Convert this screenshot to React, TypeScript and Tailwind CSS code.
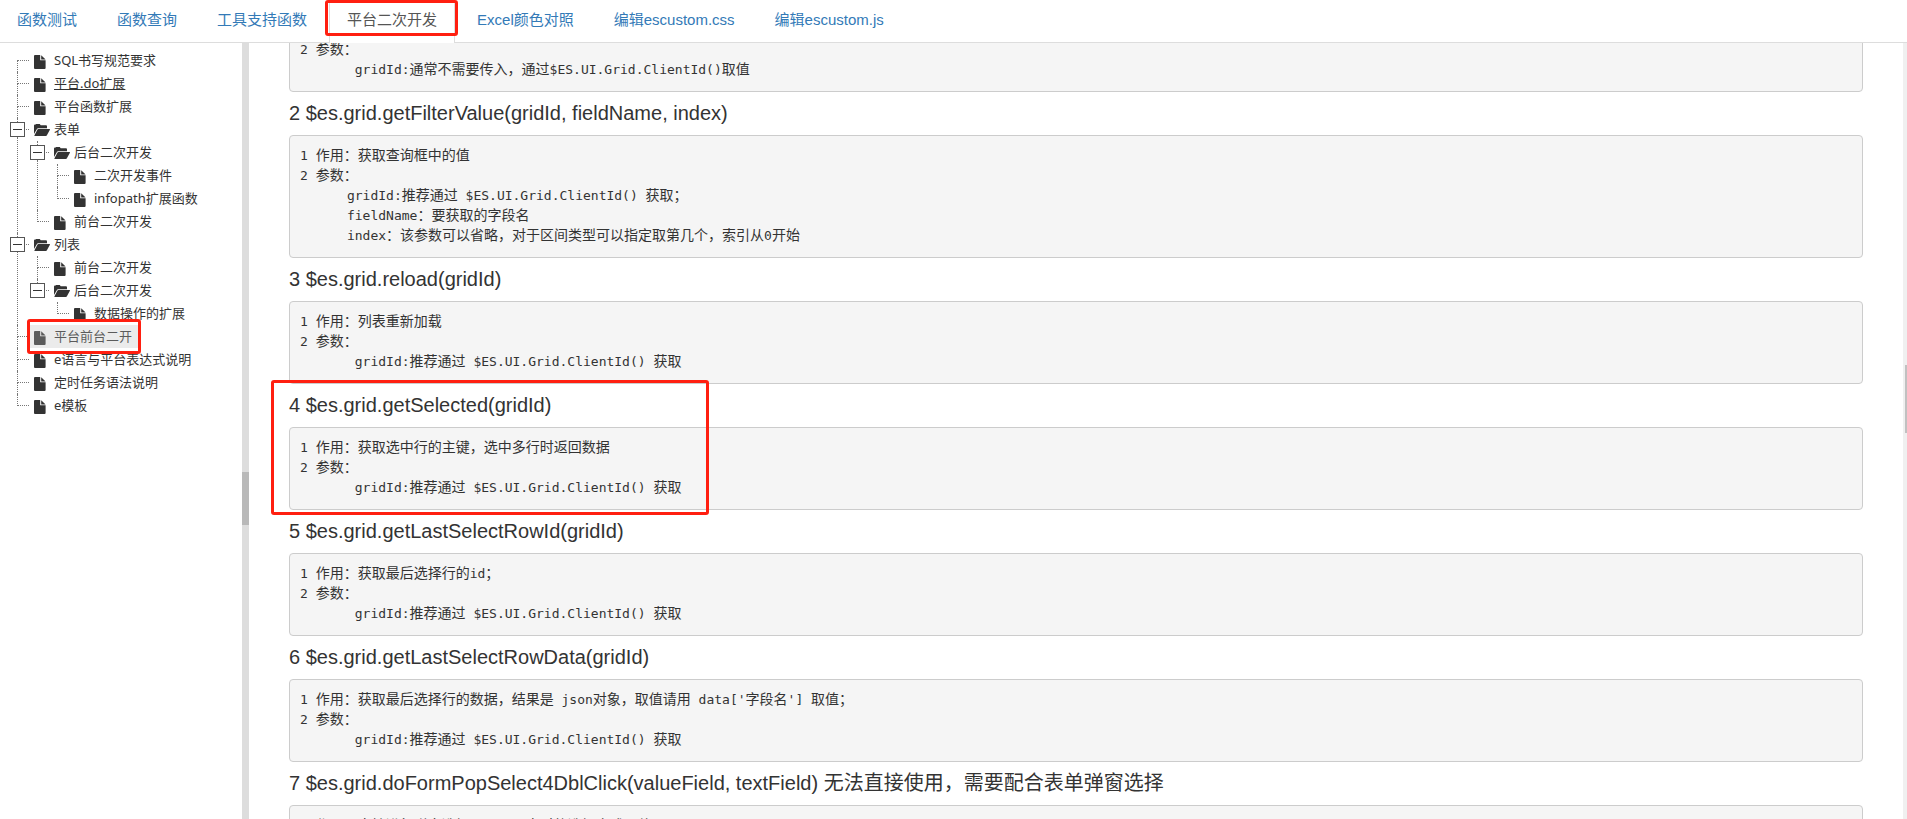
import clsx from "clsx";

type Node = {
  label: string;
  children?: Node[];
  underline?: boolean;
  selected?: boolean;
};

const tabs = [
  "函数测试",
  "函数查询",
  "工具支持函数",
  "平台二次开发",
  "Excel颜色对照",
  "编辑escustom.css",
  "编辑escustom.js",
];
const activeTab = "平台二次开发";

const tree: Node[] = [
  { label: "SQL书写规范要求" },
  { label: "平台.do扩展", underline: true },
  { label: "平台函数扩展" },
  {
    label: "表单",
    children: [
      {
        label: "后台二次开发",
        children: [{ label: "二次开发事件" }, { label: "infopath扩展函数" }],
      },
      { label: "前台二次开发" },
    ],
  },
  {
    label: "列表",
    children: [
      { label: "前台二次开发" },
      { label: "后台二次开发", children: [{ label: "数据操作的扩展" }] },
    ],
  },
  { label: "平台前台二开", selected: true },
  { label: "e语言与平台表达式说明" },
  { label: "定时任务语法说明" },
  { label: "e模板" },
];

const sections = [
  {
    title: "2 $es.grid.getFilterValue(gridId, fieldName, index)",
    code: `1 作用：获取查询框中的值
2 参数：
      gridId:推荐通过 $ES.UI.Grid.ClientId() 获取；
      fieldName：要获取的字段名
      index：该参数可以省略，对于区间类型可以指定取第几个，索引从0开始`,
  },
  {
    title: "3 $es.grid.reload(gridId)",
    code: `1 作用：列表重新加载
2 参数：
       gridId:推荐通过 $ES.UI.Grid.ClientId() 获取`,
  },
  {
    title: "4 $es.grid.getSelected(gridId)",
    marked: true,
    code: `1 作用：获取选中行的主键，选中多行时返回数据
2 参数：
       gridId:推荐通过 $ES.UI.Grid.ClientId() 获取`,
  },
  {
    title: "5 $es.grid.getLastSelectRowId(gridId)",
    code: `1 作用：获取最后选择行的id；
2 参数：
       gridId:推荐通过 $ES.UI.Grid.ClientId() 获取`,
  },
  {
    title: "6 $es.grid.getLastSelectRowData(gridId)",
    code: `1 作用：获取最后选择行的数据，结果是 json对象，取值请用 data['字段名'] 取值；
2 参数：
       gridId:推荐通过 $ES.UI.Grid.ClientId() 获取`,
  },
  {
    title: "7 $es.grid.doFormPopSelect4DblClick(valueField, textField) 无法直接使用，需要配合表单弹窗选择",
    code: `1 作用：支持进行弹窗选择，从从双击时的选择方式取值`,
  },
];

const FileIcon = () => (
  <svg width="12" height="14" viewBox="0 0 12 14" fill="#333">
    <path d="M1 0h5.2v5.2h5.4V13a1 1 0 0 1-1 1H1a1 1 0 0 1-1-1V1a1 1 0 0 1 1-1z" />
    <path d="M7.2 0.2 11.6 4.4H7.2z" />
  </svg>
);

const FolderIcon = () => (
  <svg width="16" height="12" viewBox="0 0 16 12" fill="#333">
    <path d="M0 10V1.4A1 1 0 0 1 1 .4h.6L2.2 0h3.6l.9 1.2H12a1 1 0 0 1 1 1v2.1H4.2a1.6 1.6 0 0 0-1.4.9z" />
    <path d="M4.4 5h11a.5.5 0 0 1 .5.8l-3 5.4a1.2 1.2 0 0 1-1 .8H1a.5.5 0 0 1-.5-.8L3.5 5.5A1 1 0 0 1 4.4 5z" />
  </svg>
);

const Mark = ({ className }: { className: string }) => (
  <span className={clsx("pointer-events-none absolute z-10 rounded-[3px] border-3 border-[#ff1f10]", className)} />
);

const TreeItem = ({ node, first, last }: { node: Node; first: boolean; last: boolean }) => (
  <li className="flex">
    <div className="flex w-5 shrink-0 flex-col">
      {node.children ? (
        <>
          <span className="ml-[7px] h-1 border-l border-dotted border-[#777]" />
          <div className="flex items-center">
            <button
              aria-label={node.label}
              className="flex size-[15px] items-center justify-center border border-[#555] bg-white"
            >
              <span className="h-px w-[9px] bg-[#333]" />
            </button>
            <span className="ml-px w-[3px] border-t border-dotted border-[#777]" />
          </div>
        </>
      ) : (
        <span
          className={clsx(
            "ml-[7px] h-3 w-3 border-b border-dotted border-[#777]",
            !first && "border-l"
          )}
        />
      )}
      {!last && <span className="ml-[7px] flex-1 border-l border-dotted border-[#777]" />}
    </div>
    <div>
      <div className="relative flex">
        <a
          href="#"
          className={clsx(
            "flex h-[23px] items-center whitespace-nowrap pl-1 pr-1.5 text-[13px]",
            node.selected && "bg-[#e7e7e7] opacity-80"
          )}
        >
          <span className={clsx("w-5", node.children ? "pt-px" : "pt-[3px]")}>
            {node.children ? <FolderIcon /> : <FileIcon />}
          </span>
          <span className={clsx(node.underline && "underline")}>{node.label}</span>
        </a>
        {node.selected && <Mark className="-left-[3px] -top-1.5 -bottom-1.5 -right-[3px]" />}
      </div>
      {node.children && <TreeList nodes={node.children} />}
    </div>
  </li>
);

const TreeList = ({ nodes, root }: { nodes: Node[]; root?: boolean }) => (
  <ul>
    {nodes.map((node, i) => (
      <TreeItem
        key={node.label}
        node={node}
        first={!!root && i === 0}
        last={i === nodes.length - 1}
      />
    ))}
  </ul>
);

// Chinese runs are set one size larger than the monospace text around them
const Code = ({ text, className }: { text: string; className?: string }) => (
  <pre
    className={clsx(
      "rounded border border-[#ccc] bg-[#f5f5f5] px-2.5 pt-[9px] pb-3 font-['DejaVu_Sans_Mono','Noto_Sans_CJK_SC',monospace] text-[13px] leading-5",
      className
    )}
  >
    {text.split("\n").map((line, i) => (
      <div key={i} className="h-5">
        {line.split(/([\u3000-\u9fff\uff00-\uffef]+)/).map((part, j) =>
          j % 2 ? (
            <span key={j} className="text-sm leading-5">
              {part}
            </span>
          ) : (
            part
          )
        )}
      </div>
    ))}
  </pre>
);

const App = () => {
  return (
    <div className="flex h-screen flex-col overflow-hidden bg-white font-['Liberation_Sans','Noto_Sans_CJK_SC',sans-serif] text-[#333]">
      <nav className="-ml-px flex h-[43px] shrink-0 gap-1 border-b border-[#ddd]">
        {tabs.map((tab) => (
          <div key={tab} className="relative h-[43px]">
            <a
              href="#"
              className={clsx(
                "flex h-full items-center border-x px-[17px] pb-0.5 text-[15px]",
                tab === activeTab
                  ? "border-[#ddd] bg-white text-[#555]"
                  : "border-transparent text-[#337ab7]"
              )}
            >
              {tab}
            </a>
            {tab === activeTab && <Mark className="-left-1 -right-[3px] top-0 h-9" />}
          </div>
        ))}
      </nav>
      <div className="flex min-h-0 flex-1">
        <aside className="w-[242px] shrink-0 overflow-hidden pl-2.5 pt-1.5 font-['Noto_Sans','Noto_Sans_CJK_SC',sans-serif]">
          <TreeList nodes={tree} root />
        </aside>
        <div className="flex w-[7px] shrink-0 flex-col justify-center bg-[#ddd]">
          <div className="mb-[-135px] h-[53px] bg-[#b9b9b9]" />
        </div>
        <main className="min-w-0 flex-1 overflow-hidden pl-10 pr-10">
          <Code
            className="-mt-3.5"
            text={`2 参数：\n       gridId:通常不需要传入，通过$ES.UI.Grid.ClientId()取值`}
          />
          {sections.map((s) => (
            <section key={s.title} className="relative">
              <h4 className="flex h-[43px] items-center whitespace-nowrap pb-0.5 text-xl">{s.title}</h4>
              <Code text={s.code} />
              {s.marked && <Mark className="-left-[18px] -top-1 -bottom-[5px] w-[438px]" />}
            </section>
          ))}
        </main>
        <div className="flex w-1 shrink-0 flex-col items-end bg-[#f0f0f0] pt-[322px]">
          <div className="h-[68px] w-0.5 bg-[#c1c1c1]" />
        </div>
      </div>
    </div>
  );
};

export default App;
